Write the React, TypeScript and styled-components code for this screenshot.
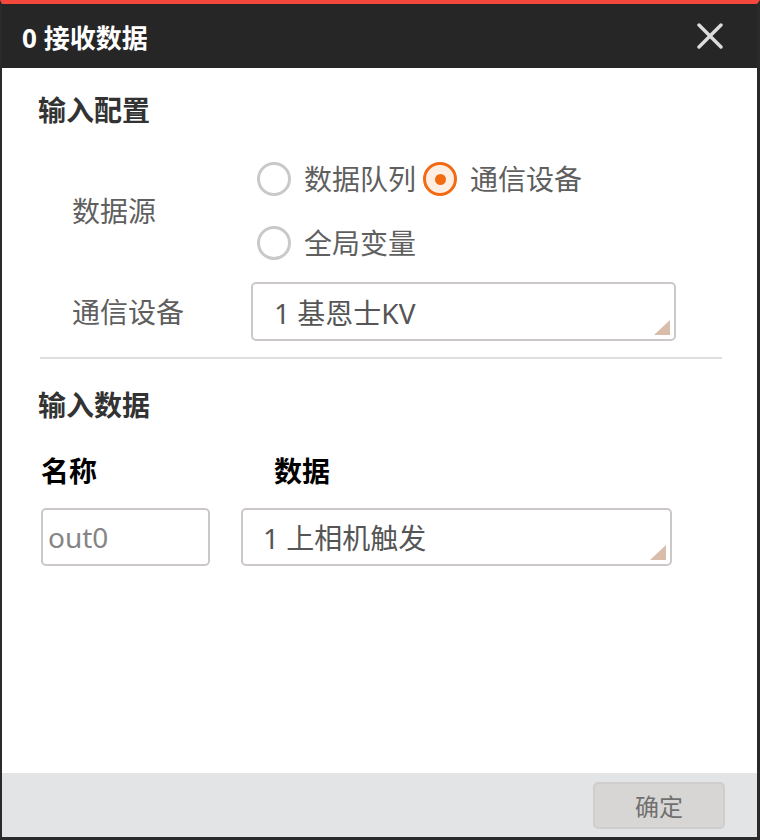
import { FC } from 'react';
import styled, { createGlobalStyle } from 'styled-components';

const GlobalStyle = createGlobalStyle`
  html, body {
    margin: 0;
    padding: 0;
    background: #ffffff;
  }
  body {
    font-family: "Noto Sans", "Noto Sans CJK SC", sans-serif;
  }
`;

const sources = [
  { id: 'queue', label: '数据队列', checked: false },
  { id: 'device', label: '通信设备', checked: true },
  { id: 'global', label: '全局变量', checked: false },
];

const App: FC = () => {
  return (
    <>
      <GlobalStyle />
      <Dialog>
        <Header>
          <Title>0 接收数据</Title>
          <CloseButton aria-label="关闭">
            <svg width="26" height="26" viewBox="0 0 26 26">
              <path d="M2 2 L24 24 M24 2 L2 24" stroke="#dcdcdc" strokeWidth="3.4" strokeLinecap="round" />
            </svg>
          </CloseButton>
        </Header>

        <Body>
          <SectionTitle>输入配置</SectionTitle>
          <FormGrid>
            <Label>数据源</Label>
            <RadioGroup>
              {sources.map((s) => (
                <RadioItem key={s.id}>
                  <Radio $checked={s.checked} />
                  <OptionText>{s.label}</OptionText>
                </RadioItem>
              ))}
            </RadioGroup>

            <Label>通信设备</Label>
            <Select $pad={21}>1 基恩士KV</Select>
          </FormGrid>

          <Divider />

          <SectionTitle>输入数据</SectionTitle>
          <DataGrid>
            <ColumnHead>名称</ColumnHead>
            <ColumnHead $indent={33}>数据</ColumnHead>
            <NameInput readOnly value="out0" />
            <Select $pad={20}>1 上相机触发</Select>
          </DataGrid>
        </Body>

        <Footer>
          <OkButton>确定</OkButton>
        </Footer>
      </Dialog>
    </>
  );
};

const Dialog = styled.div`
  box-sizing: border-box;
  width: 760px;
  height: 840px;
  display: flex;
  flex-direction: column;
  border-top: 4px solid #f4483d;
  border-left: 2px solid #2a2a2a;
  border-right: 3px solid #2a2a2a;
  border-bottom: 3px solid #2a2a2a;
  background: #ffffff;
`;

const Header = styled.div`
  height: 64px;
  flex: none;
  display: flex;
  align-items: center;
  justify-content: space-between;
  padding: 0 34px 0 20px;
  background: #262626;
`;

const Title = styled.h1`
  margin: 0;
  padding-top: 4px;
  color: #ffffff;
  font-size: 26px;
  font-weight: 700;
  line-height: 1;
`;

const CloseButton = styled.button`
  display: flex;
  padding: 0;
  border: none;
  background: transparent;
  cursor: pointer;
`;

const Body = styled.div`
  flex: 1;
  padding: 22px 35px 0 36px;
`;

const SectionTitle = styled.h2`
  margin: 0;
  color: #333333;
  font-size: 28px;
  font-weight: 700;
  line-height: 40px;
`;

const FormGrid = styled.div`
  display: grid;
  grid-template-columns: 179px 425px;
  grid-template-rows: 128px 59px;
  row-gap: 7px;
  margin-top: 17px;
  padding-left: 34px;
`;

const Label = styled.div`
  align-self: center;
  color: #5f5f5f;
  font-size: 28px;
  line-height: 40px;
`;

const RadioGroup = styled.div`
  display: flex;
  flex-wrap: wrap;
  column-gap: 7px;
  padding-left: 6px;
  width: 465px;
`;

const RadioItem = styled.label`
  display: flex;
  align-items: center;
  gap: 13px;
  height: 64px;
  cursor: pointer;
`;

const Radio = styled.span<{ $checked?: boolean }>`
  box-sizing: border-box;
  width: 34px;
  height: 34px;
  border-radius: 50%;
  display: flex;
  align-items: center;
  justify-content: center;
  border: 3px solid ${(p) => (p.$checked ? '#f26a12' : '#c9c9c9')};
  background: ${(p) => (p.$checked ? '#fdeee4' : '#ffffff')};
  &::before {
    content: '';
    display: ${(p) => (p.$checked ? 'block' : 'none')};
    width: 11px;
    height: 11px;
    border-radius: 50%;
    background: #f26a12;
  }
`;

const OptionText = styled.span`
  color: #5f5f5f;
  font-size: 28px;
  line-height: 40px;
`;

const Select = styled.div<{ $pad: number }>`
  position: relative;
  box-sizing: border-box;
  height: 59px;
  display: flex;
  align-items: center;
  padding-left: ${(p) => p.$pad}px;
  border: 2px solid #cdc8c8;
  border-radius: 5px;
  color: #555555;
  font-size: 28px;
  background: #ffffff;
  &::after {
    content: '';
    position: absolute;
    right: 4px;
    bottom: 4px;
    width: 0;
    height: 0;
    border-left: 16px solid transparent;
    border-bottom: 15px solid #d9bcaa;
  }
`;

const Divider = styled.hr`
  margin: 16px 0 26px 2px;
  border: none;
  border-top: 2px solid #dedede;
`;

const DataGrid = styled.div`
  display: grid;
  grid-template-columns: 169px 431px;
  grid-template-rows: 40px 58px;
  column-gap: 31px;
  row-gap: 17px;
  margin-top: 26px;
  padding-left: 3px;
  & > ${Select} {
    height: 58px;
  }
`;

const ColumnHead = styled.div<{ $indent?: number }>`
  padding-left: ${(p) => p.$indent ?? 0}px;
  color: #000000;
  font-size: 28px;
  font-weight: 700;
  line-height: 40px;
`;

const NameInput = styled.input`
  box-sizing: border-box;
  width: 169px;
  height: 58px;
  padding: 0 0 0 5px;
  border: 2px solid #cdc8c8;
  border-radius: 5px;
  color: #858585;
  font-family: "Noto Sans", "Noto Sans CJK SC", sans-serif;
  font-size: 28px;
  outline: none;
`;

const Footer = styled.div`
  height: 64px;
  flex: none;
  display: flex;
  align-items: center;
  justify-content: flex-end;
  padding-right: 32px;
  background: #e3e4e6;
`;

const OkButton = styled.button`
  box-sizing: border-box;
  width: 132px;
  height: 47px;
  margin-top: 1px;
  border: 2px solid #d0cecd;
  border-radius: 5px;
  background: #d8d6d5;
  color: #707070;
  font-family: "Noto Sans", "Noto Sans CJK SC", sans-serif;
  font-size: 24px;
  cursor: pointer;
`;

export default App;
